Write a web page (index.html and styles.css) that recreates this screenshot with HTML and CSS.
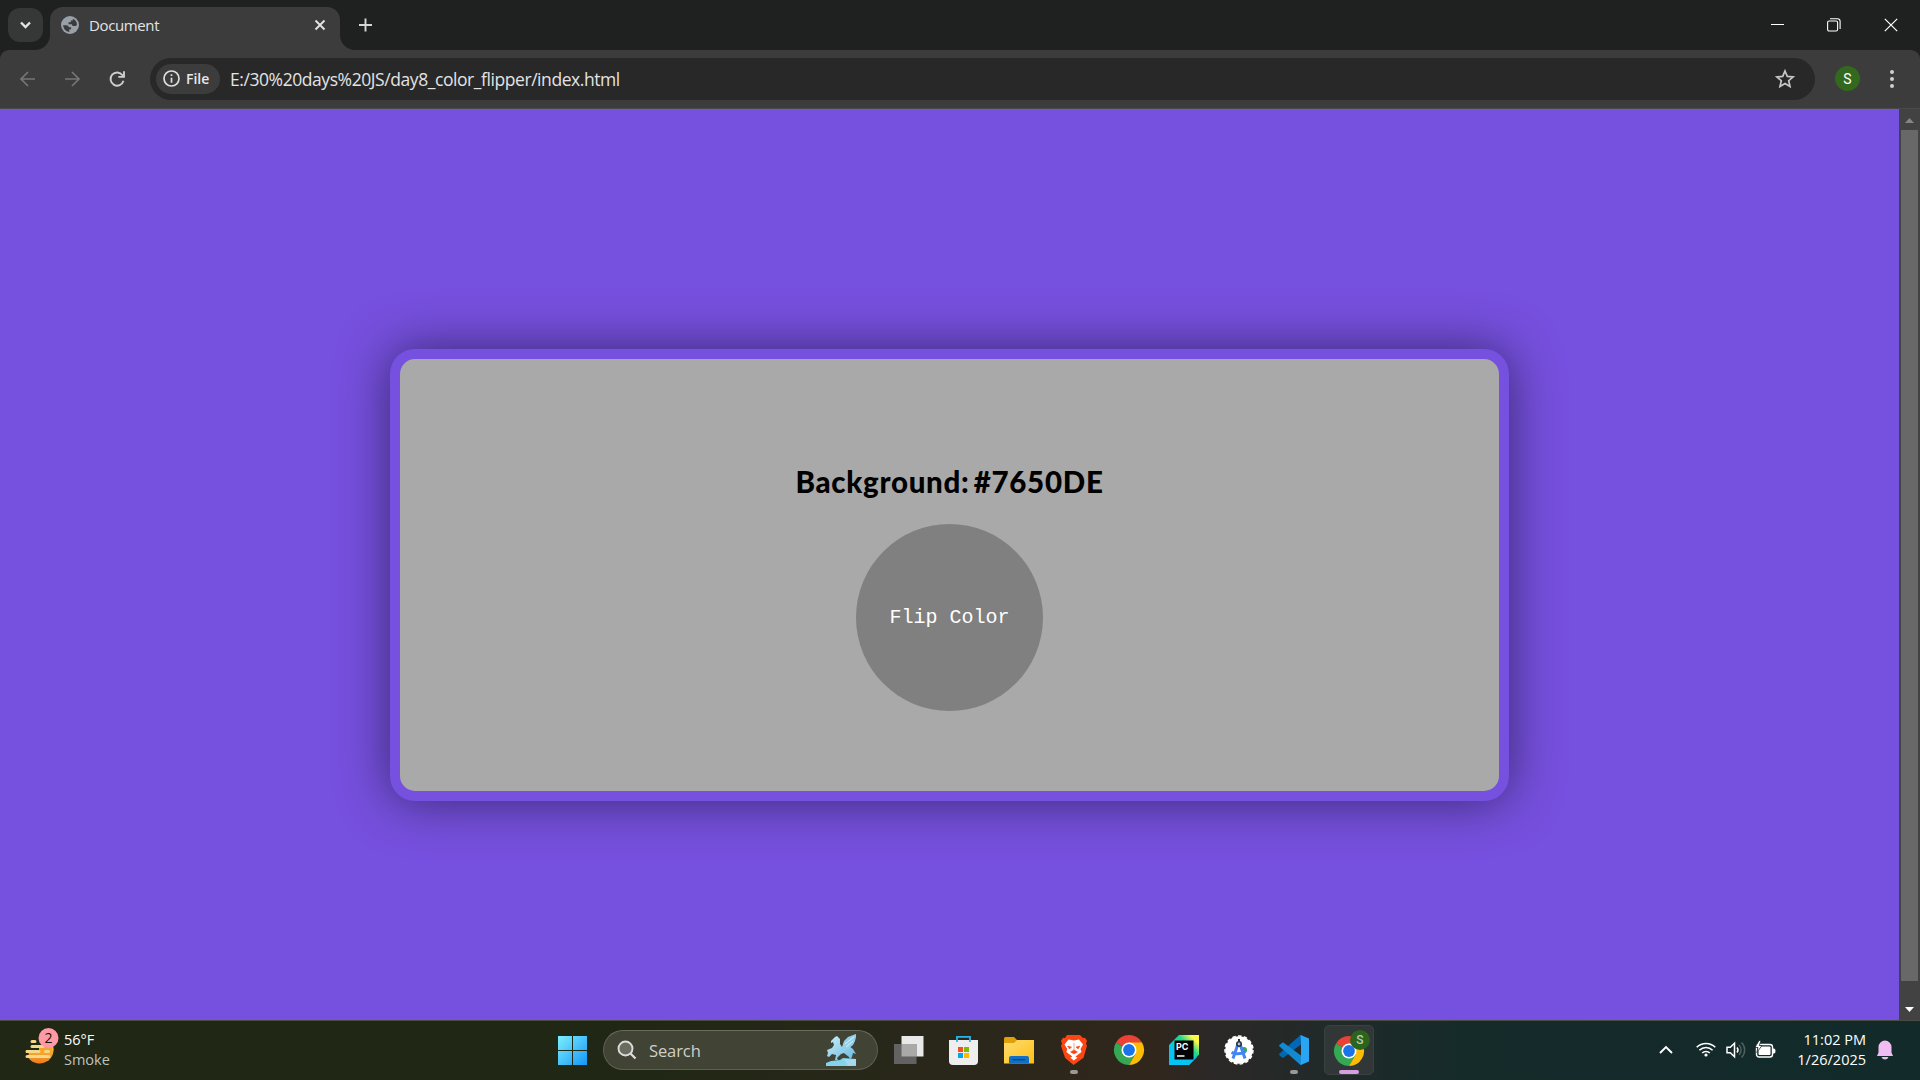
FILE: index.html
```html
<!DOCTYPE html>
<html lang="en">
<head>
<meta charset="utf-8">
<title>Document</title>
<link rel="stylesheet" href="styles.css">
</head>
<body>
<div class="tabstrip">
  <div class="tab-search"><svg width="35" height="34" viewBox="0 0 35 34"><path d="M13 14.5l4.5 4.5 4.5-4.5" fill="none" stroke="#e3e3e3" stroke-width="2.4"/></svg></div>
  <div class="tab">
    <svg class="globe" width="18" height="18" viewBox="0 0 18 18"><circle cx="9" cy="9" r="9" fill="#9aa0a8"/><path d="M2 9.300h3.500q2 0 2.400 2h2.200v2H8.300V15.900Q3 15.300 2 9.300zM11.800 2.700Q15.800 4.500 16 8.500q-.8 2-2.500 1.500-2.500.3-2.700-1.800H7.500V6.300h2.300V4.500h2z" fill="#3a3b3c"/></svg>
    <span class="tab-title">Document</span>
    <svg class="tab-close" width="12" height="12" viewBox="0 0 12 12"><path d="M1.500 1.500l9 9M10.500 1.500l-9 9" stroke="#e3e3e3" stroke-width="1.900"/></svg>
  </div>
  <svg class="newtab" width="14" height="14" viewBox="0 0 14 14"><path d="M6.500 .5v13M0 7h13" stroke="#d6d6d6" stroke-width="1.900"/></svg>
  <div class="window-buttons">
    <svg width="14" height="14" viewBox="0 0 14 14"><path d="M1 6.500h13" stroke="#fff"/></svg>
    <svg width="14" height="14" viewBox="0 0 14 14" fill="none" stroke="#fff" stroke-width="1.100"><rect x=".6" y="3" width="10" height="10" rx="1.500"/><path d="M3 .7h7.500a2.600 2.600 0 0 1 2.600 2.600V11"/></svg>
    <svg width="14" height="14" viewBox="0 0 14 14"><path d="M.8 .8l12.400 12.400M13.200.8L.8 13.200" stroke="#fff" stroke-width="1.200"/></svg>
  </div>
</div>
<div class="toolbar">
  <svg class="nav" width="16" height="16" viewBox="0 0 16 16" fill="none" stroke="#767676" stroke-width="1.700"><path d="M16 8H2M9 1L2 8l7 7"/></svg>
  <svg class="nav" width="16" height="16" viewBox="0 0 16 16" fill="none" stroke="#767676" stroke-width="1.700"><path d="M1 8h14M8 1l7 7-7 7"/></svg>
  <svg class="nav" width="16" height="16" viewBox="0 0 16 16" fill="none" stroke="#cfcfcf" stroke-width="1.900"><path d="M14.500 9.800A6.600 6.600 0 1 1 13.500 4.200l1 1.300M15 .3v5.600H9.300"/></svg>
  <div class="omnibox">
    <div class="chip"><svg width="17" height="17" viewBox="0 0 17 17"><circle cx="8.500" cy="8.500" r="7.500" fill="none" stroke="#dedede" stroke-width="1.700"/><path d="M8.500 7.700v5M8.500 4.200v1.900" stroke="#dedede" stroke-width="1.700"/></svg><span>File</span></div>
    <span class="url">E:/30%20days%20JS/day8_color_flipper/index.html</span>
    <svg class="star" width="20" height="19" viewBox="0 0 20 19"><path d="M10 2l2.300 5.400 5.800.5-4.400 3.800 1.300 5.700-5-3-5 3 1.300-5.700L1.900 7.900l5.800-.5z" fill="none" stroke="#c7c7c7" stroke-width="1.700"/></svg>
  </div>
  <div class="avatar">S</div>
  <svg class="menu" width="6" height="20" viewBox="0 0 6 20" fill="#cfcfcf"><circle cx="3" cy="3" r="2"/><circle cx="3" cy="10" r="2"/><circle cx="3" cy="17" r="2"/></svg>
</div>
<div class="viewport">
  <main class="page">
    <section class="card">
      <h1>Background: #7650DE</h1>
      <button class="flip">Flip Color</button>
    </section>
  </main>
  <div class="scrollbar">
    <svg width="21" height="21" viewBox="0 0 21 21"><path d="M6 14l4.500-5 4.500 5z" fill="#858585"/></svg>
    <div class="thumb"></div>
    <svg width="21" height="39" viewBox="0 0 21 39"><path d="M6 26h9l-4.500 5z" fill="#fff"/></svg>
  </div>
</div>
<footer class="taskbar">
  <div class="weather">
    <svg width="36" height="38" viewBox="0 0 36 38"><defs><linearGradient id="sun" x2="0" y2="1"><stop offset="0" stop-color="#ffca45"/><stop offset="1" stop-color="#ee7b19"/></linearGradient></defs><path d="M5 17h23.500a14 14 0 0 1-24 14z" fill="url(#sun)"/><path d="M4 17h14v6H4z" fill="#212715"/><path d="M15 18h13v8H2v-3h13z" fill="#f6a52c"/><g stroke="#f3d88a" stroke-width="3" stroke-linecap="round"><path d="M8 14.500h3M8 19.500h11M3 24.500h12M21.500 24.500h3M3 29.500h22"/></g><circle cx="24.500" cy="11" r="10" fill="#ff99a4"/><text x="24.500" y="16" text-anchor="middle" font-size="14" font-family="Open Sans, sans-serif" fill="#111">2</text></svg>
    <div class="weather-text"><span>56°F</span><span class="dim">Smoke</span></div>
  </div>
  <div class="apps">
    <div class="app start"><svg width="30" height="30" viewBox="0 0 30 30"><defs><linearGradient id="win" x2="1" y2="1"><stop offset="0" stop-color="#7cefff"/><stop offset="1" stop-color="#1596f5"/></linearGradient></defs><path d="M1 1h14v14H1zM16 1h14v14H16zM1 16h14v14H1zM16 16h14v14H16z" fill="url(#win)"/></svg></div>
    <div class="search">
      <svg width="20" height="20" viewBox="0 0 20 20" fill="none" stroke="#dddcda" stroke-width="1.900"><circle cx="8.500" cy="8.500" r="7" fill="#6a6c60"/><path d="M13.500 13.500l5 5" stroke-width="2.300"/></svg>
      <span>Search</span>
      <svg class="pegasus" width="32" height="32" viewBox="0 0 32 32"><defs><linearGradient id="peg" x2="1" y2="1"><stop offset="0" stop-color="#c7effa"/><stop offset="1" stop-color="#67b7df"/></linearGradient></defs><path d="M0 29l5-2 9-1 3-2 13 1v7H0z" fill="#83d3ec"/><path d="M18 25h12v6l-8 1z" fill="#a6d9ef"/><path d="M5 7l4-4 2-1 3 3v5l2 3 7-1 4 3 3 5-3-1-1 4-2 3-1-3-5-4-3 1-4 4 1 2H9l1-5-4-1-3 3-2-1 1-3-1-3 5-2 2-3-1-3-2 1z" fill="url(#peg)"/><path d="M16 13l2-6 4-4 8-3v3l-1 4-2 4-5 4-5 1z" fill="#94d0ea"/><path d="M19 10l9-7M20 13l7-6" stroke="#d8f2fa"/></svg>
    </div>
    <div class="app"><svg width="30" height="30" viewBox="0 0 30 30"><path d="M7.500 1h22v20.500h-22z" fill="#e9e9e9"/><path d="M0 9h22.500v20H0z" fill="#626262"/><path d="M7.500 9h15v12.500h-15z" fill="#a9a9a7"/></svg></div>
    <div class="app"><svg width="30" height="30" viewBox="0 0 30 30"><path d="M0 5h29v21q0 4-4 4H4q-4 0-4-4z" fill="#eee"/><path d="M8 7V1.800h13V7" fill="none" stroke="#25b7ec" stroke-width="1.800"/><path d="M9 12h5v5H9z" fill="#f25022"/><path d="M15 12h5v5h-5z" fill="#7fba00"/><path d="M9 18h5v5H9z" fill="#00a4ef"/><path d="M15 18h5v5h-5z" fill="#ffb900"/></svg></div>
    <div class="app"><svg width="30" height="30" viewBox="0 0 30 30"><defs><linearGradient id="fold" x2="1" y2="1"><stop offset="0" stop-color="#ffdc70"/><stop offset="1" stop-color="#fdbf17"/></linearGradient></defs><path d="M0 3.500Q0 2 1.500 2H10l3 3v5H0z" fill="#dfa008"/><path d="M0 8h10l3-3h17v23.500H0z" fill="url(#fold)"/><path d="M5 28.500V23q0-2 2-2h16q2 0 2 2v5.500z" fill="#1070c6"/><path d="M8.500 24.700h12.500" stroke="#083f83" stroke-width="1.200"/></svg></div>
    <div class="app running"><svg width="30" height="30" viewBox="0 0 30 30"><path d="M8 0h13l3 3 2-.3 2 3-1 3 1 2-3.500 12L14.500 30 6 22.700 2 10.700l1-2-1-3 2-3 2 .3z" fill="#fb4613"/><path d="M15 5.500l5-1 4 5-2.500 4.500 1 3-6 4.500 2 1.200-3.700 2.800-3.500-2.800 2-1.200-6-4.500 1-3L5.500 9.500l4-5z" fill="#fff"/><path d="M15 8v7l-3.500 2L15 19l3.500-2-3.500-2M8.500 11l4 1-2 2zM21 11l-4 1 2 2z" fill="#fb4613" stroke="#fb4613" stroke-width=".5"/></svg></div>
    <div class="app"><svg width="30" height="30" viewBox="0 0 30 30"><g id="chrome"><path d="M15 15L2 7.500A15 15 0 0 1 28 7.500z" fill="#ea4335"/><path d="M15 15v0L2 7.500A15 15 0 0 0 15 30L22 18z" fill="#34a853"/><path d="M15 7.500h13A15 15 0 0 1 15 30l6.500-11.200z" fill="#fbbc04"/><circle cx="15" cy="15" r="7.500" fill="#fff"/><circle cx="15" cy="15" r="5.900" fill="#1a73e8"/></g></svg></div>
    <div class="app"><svg width="30" height="30" viewBox="0 0 30 30"><defs><linearGradient id="pc" y1="1" x2="1" y2="0"><stop offset=".3" stop-color="#07c3f2"/><stop offset=".65" stop-color="#21d789"/><stop offset=".85" stop-color="#fcf84a"/></linearGradient></defs><path d="M10 0h20v19.500L20 30H0V10z" fill="url(#pc)"/><path d="M0 15v15h20l8-8z" fill="#07c3f2"/><path d="M5.500 5.500h19v19h-19z"/><path d="M8 21h7.500" stroke="#fff" stroke-width="1.500"/><text x="7" y="14.500" font-size="9" font-weight="700" font-family="Inter, sans-serif" fill="#fff">PC</text></svg></div>
    <div class="app"><svg width="30" height="30" viewBox="0 0 30 30"><circle cx="15" cy="15" r="13.700" fill="#fff"/><circle cx="15" cy="15" r="14" fill="none" stroke="#fff" stroke-width="1.500" stroke-dasharray="3.600 2.265"/><circle cx="20" cy="15" r="3" fill="#34a853"/><path d="M14 9L9 23.500M16 9l5 14.500M7.500 17.500q7.500 3 14-1" fill="none" stroke="#4285f4" stroke-width="3"/><circle cx="15" cy="9" r="2.200" fill="#bbb" stroke="#223345" stroke-width="1.600"/><path d="M15 4v3" stroke="#223345" stroke-width="2"/></svg></div>
    <div class="app running"><svg width="30" height="30" viewBox="0 0 30 30"><path d="M0 19L21.500 0 24 1v7L4 23l-3-2z" fill="#0068b5"/><path d="M1 9.500l3-2.300L24 22v7L21.500 30 0 11z" fill="#1389d2"/><path d="M21.500 0L30 3.500v23L21.500 30l.5-7V7z" fill="#29a5f2"/></svg></div>
    <div class="app active"><svg width="40" height="36" viewBox="0 0 40 36"><use href="#chrome" y="6"/><circle cx="26" cy="10" r="10" fill="#2c631d"/><text x="26" y="14.200" text-anchor="middle" font-size="12" font-weight="500" font-family="Roboto, sans-serif" fill="#b7cdb0">S</text></svg></div>
  </div>
  <div class="tray">
    <svg class="chevron" width="14" height="8" viewBox="0 0 14 8"><path d="M1 7l6-6 6 6" fill="none" stroke="#fff" stroke-width="1.900"/></svg>
    <svg class="wifi" width="20" height="15" viewBox="0 0 20 15" fill="none" stroke="#fff" stroke-width="1.600"><path d="M.7 5.300a13.200 13.200 0 0 1 18.600 0M3.400 8.200a9.300 9.300 0 0 1 13.200 0M6.200 11a5.400 5.400 0 0 1 7.600 0"/><circle cx="10" cy="13" r="1.600" fill="#fff" stroke="none"/></svg>
    <svg class="sound" width="20" height="18" viewBox="0 0 20 18" fill="none" stroke="#fff" stroke-width="1.500"><path d="M1 6.200h3.300L8.500 2.200v13.600l-4.200-4H1z"/><path d="M11 6.500a4 4 0 0 1 0 5"/><path d="M13 4a7 7 0 0 1 0 10M15.500 1.500a10.500 10.500 0 0 1 0 15" stroke="#4e605f"/></svg>
    <svg class="battery" width="21" height="18" viewBox="0 0 21 18"><rect x="1.500" y="3.500" width="16" height="12.500" rx="2.500" fill="none" stroke="#fff" stroke-width="1.400"/><rect x="3.500" y="5.500" width="12" height="8.500" rx="1" fill="#fff"/><path d="M18 7.500h1q1.500 0 1.500 2.500T19 12.500h-1z" fill="#fff"/><path d="M4-.5L0 6.500h3l-1.200 5L7 4.500H4.300L6-.5z" fill="#fff" stroke="#142b2a" stroke-width=".8"/></svg>
    <div class="clock"><span>11:02 PM</span><span>1/26/2025</span></div>
    <svg class="bell" width="18" height="20" viewBox="0 0 18 20"><path d="M1 16l1.500-3.500V7a6.500 6.500 0 0 1 13 0v5.500L17 16z" fill="#efbdf2"/><path d="M5.500 17h7q-1 2.500-3.500 2.500T5.500 17z" fill="#efbdf2"/></svg>
  </div>
</footer>
</body>
</html>
```

FILE: styles.css
```css
* { box-sizing: border-box; }
html, body { height: 100%; }
body {
  margin: 0;
  display: flex;
  flex-direction: column;
  overflow: hidden;
  background: #1f2120;
  font-family: "Open Sans", "Noto Sans", sans-serif;
}
svg { display: block; flex: none; overflow: visible; }
span { white-space: nowrap; }

.tabstrip {
  height: 50px;
  flex: none;
  display: flex;
  align-items: flex-start;
  padding-left: 8px;
  background: #1f2120;
}
.tab-search {
  width: 35px;
  height: 34px;
  margin-top: 8px;
  border-radius: 12px;
  background: #363737;
}
.tab {
  position: relative;
  width: 290px;
  height: 43px;
  margin: 7px 0 0 7px;
  padding: 0 14px 8px 11px;
  display: flex;
  align-items: center;
  border-radius: 13px 13px 0 0;
  background: #3c3c3c;
}
.tab::before, .tab::after {
  content: "";
  position: absolute;
  bottom: 0;
  width: 15px;
  height: 15px;
}
.tab::before { left: -15px; background: radial-gradient(circle at 0 0, transparent 14.5px, #3c3c3c 15.5px); }
.tab::after { right: -15px; background: radial-gradient(circle at 100% 0, transparent 14.5px, #3c3c3c 15.5px); }
.tab-title { flex: 1; margin-left: 10px; font-size: 15px; letter-spacing: -0.38px; color: #e3e3e3; }
.newtab { margin: 18px 0 0 19px; }
.window-buttons { display: flex; gap: 43px; margin: 18px 22px 0 auto; }

.toolbar {
  height: 59px;
  flex: none;
  display: flex;
  align-items: center;
  padding: 0 25px 1px 19px;
  border-bottom: 1px solid #4a4a4a;
  border-radius: 9px 9px 0 0;
  background: #3c3c3c;
}
.nav { margin-right: 29px; }
.omnibox {
  width: 1665px;
  height: 42px;
  margin-left: -4px;
  display: flex;
  align-items: center;
  padding: 0 20px 0 6px;
  border-radius: 21px;
  background: #282828;
}
.chip {
  width: 64px;
  height: 30px;
  display: flex;
  align-items: center;
  gap: 6px;
  padding-left: 7px;
  border-radius: 15px;
  background: #3c3c3c;
  color: #e8e8e8;
  font-size: 14px;
  font-weight: 600;
}
.url { flex: 1; margin-left: 10px; font-size: 17.5px; letter-spacing: -0.43px; color: #e3e3e3; }
.avatar {
  width: 25px;
  height: 25px;
  margin-left: 20px;
  border-radius: 50%;
  background: #33691e;
  color: #fff;
  font: 400 14px/26px Roboto, sans-serif;
  text-align: center;
}
.menu { margin-left: auto; }

.viewport { height: 911px; flex: none; display: flex; }
.page { flex: 1; padding-top: 240px; background: #7650de; }
.card {
  width: 1119px;
  height: 452px;
  margin: 0 auto;
  padding-top: 98px;
  display: flex;
  flex-direction: column;
  align-items: center;
  border: 10px solid #7650de;
  border-radius: 25px;
  background: #a9a9a9;
  box-shadow: 0 0 50px rgba(0, 0, 0, 0.5);
}
h1 {
  margin: 0;
  font: 900 29.5px/50px Lato, sans-serif;
  letter-spacing: 0.7px;
  word-spacing: -3.5px;
  white-space: nowrap;
}
.flip {
  width: 187px;
  height: 187px;
  margin: 17px 0 0;
  padding: 0;
  border: 0;
  border-radius: 50%;
  background: #808080;
  color: #fff;
  font: 20px "Liberation Mono", monospace;
}
.scrollbar { width: 21px; background: #424242; }
.thumb { width: 17px; height: 851px; margin-left: 2px; background: #686868; }

.taskbar {
  height: 60px;
  flex: none;
  display: flex;
  border-top: 1px solid #4a4c42;
  background: linear-gradient(90deg, #202715 0, #212715 34%, #2b271b 52%, #31261c 60%, #2b2827 63%, #212a29 69%, #152b2a 76%, #132a2a 100%);
  color: #fff;
}
.weather { width: 544px; display: flex; padding: 6px 0 0 24px; }
.weather-text { display: flex; flex-direction: column; margin: 3px 0 0 4px; font-size: 14.5px; line-height: 20px; }
.dim { color: #bfc1bb; }
.apps { display: flex; }
.app { position: relative; width: 55px; height: 58px; display: grid; place-items: center; }
.start { width: 56px; height: 57px; }
.search {
  width: 275px;
  height: 40px;
  margin: 9px 3px 0;
  display: flex;
  align-items: center;
  padding: 0 19px 0 13px;
  border: 1px solid #5d5f50;
  border-top-color: #6b6c60;
  border-radius: 20px;
  background: #414434;
}
.search span { flex: 1; margin-left: 12px; font-size: 16.5px; letter-spacing: -0.1px; color: #cfcfc9; }
.running::after, .active::after {
  content: "";
  position: absolute;
  left: 24px;
  bottom: 5px;
  width: 8px;
  height: 4px;
  border-radius: 2px;
  background: #999996;
}
.active {
  width: 50px;
  height: 50px;
  margin: 4px 0 0 3px;
  display: block;
  padding: 4px 0 0 10px;
  border: 1px solid #3a4140;
  border-radius: 5px;
  background: #303736;
}
.active::after { left: 14px; bottom: 0; width: 20px; background: #d79de3; }
.tray { flex: 1; display: flex; align-items: center; padding: 0 26px 2px 0; }
.chevron { margin-left: auto; }
.wifi { margin-left: 23px; }
.sound { margin-left: 10px; }
.battery { margin-left: 9px; }
.clock { width: 90px; display: flex; flex-direction: column; align-items: flex-end; font-size: 14.5px; line-height: 20px; }
.bell { margin-left: 10px; }
```
